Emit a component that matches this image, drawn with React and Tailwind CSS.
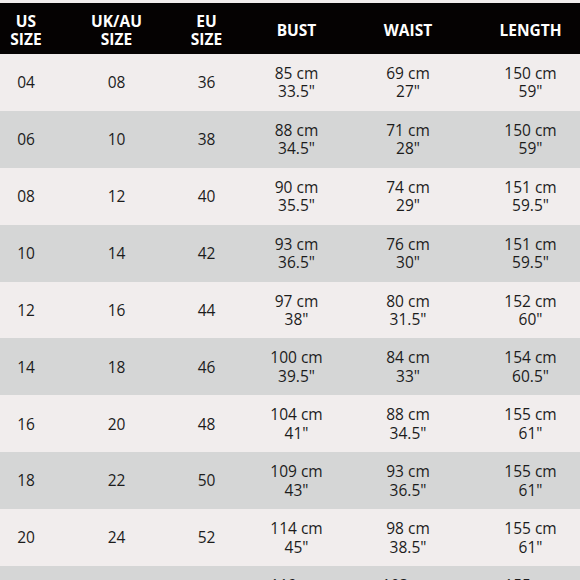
const rows = [
  ["04", "08", "36", "85 cm", '33.5"', "69 cm", '27"', "150 cm", '59"'],
  ["06", "10", "38", "88 cm", '34.5"', "71 cm", '28"', "150 cm", '59"'],
  ["08", "12", "40", "90 cm", '35.5"', "74 cm", '29"', "151 cm", '59.5"'],
  ["10", "14", "42", "93 cm", '36.5"', "76 cm", '30"', "151 cm", '59.5"'],
  ["12", "16", "44", "97 cm", '38"', "80 cm", '31.5"', "152 cm", '60"'],
  ["14", "18", "46", "100 cm", '39.5"', "84 cm", '33"', "154 cm", '60.5"'],
  ["16", "20", "48", "104 cm", '41"', "88 cm", '34.5"', "155 cm", '61"'],
  ["18", "22", "50", "109 cm", '43"', "93 cm", '36.5"', "155 cm", '61"'],
  ["20", "24", "52", "114 cm", '45"', "98 cm", '38.5"', "155 cm", '61"'],
  ["22", "26", "54", "119 cm", '47"', "103 cm", '40.5"', "155 cm", '61"'],
];

const cols = "grid grid-cols-[52px_129px_51px_129px_94px_125px]";

function Two({ a, b, last }) {
  return (
    <div className={`flex flex-col items-center justify-center text-center ${last ? "pl-[26px]" : ""}`}>
      <span>{a}</span>
      <span>{b}</span>
    </div>
  );
}

export default function App() {
  return (
    <div
      className="w-[580px] h-[580px] overflow-hidden bg-[#f1eded] pt-[3px]"
      style={{ fontFamily: '"Open Sans", "Liberation Sans", sans-serif' }}
    >
      <div className={`${cols} h-[51px] bg-[#050202] text-white font-bold text-[15.5px] leading-[18.5px] pt-[3px]`}>
        <div className="flex flex-col items-center justify-center"><span>US</span><span>SIZE</span></div>
        <div className="flex flex-col items-center justify-center"><span>UK/AU</span><span>SIZE</span></div>
        <div className="flex flex-col items-center justify-center"><span>EU</span><span>SIZE</span></div>
        <div className="flex items-center justify-center">BUST</div>
        <div className="flex items-center justify-center">WAIST</div>
        <div className="flex items-center justify-center pl-[26px]">LENGTH</div>
      </div>
      {rows.map((r, i) => (
        <div
          key={i}
          className={`${cols} h-[56.9px] text-[15.5px] leading-[18.5px] text-[#1c1c1c] ${i % 2 === 0 ? "bg-[#f1eded]" : "bg-[#d5d6d6]"}`}
        >
          <div className="flex items-center justify-center">{r[0]}</div>
          <div className="flex items-center justify-center">{r[1]}</div>
          <div className="flex items-center justify-center">{r[2]}</div>
          <Two a={r[3]} b={r[4]} />
          <Two a={r[5]} b={r[6]} />
          <Two a={r[7]} b={r[8]} last />
        </div>
      ))}
    </div>
  );
}
